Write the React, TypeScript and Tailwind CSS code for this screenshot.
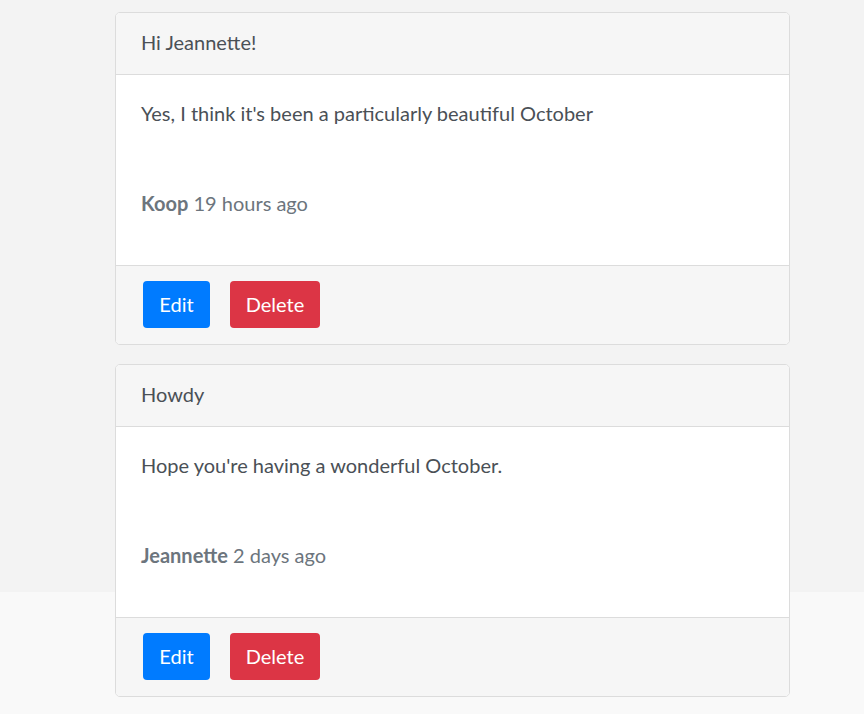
const posts = [
  {
    title: "Hi Jeannette!",
    body: "Yes, I think it's been a particularly beautiful October",
    author: "Koop",
    when: "19 hours ago",
  },
  {
    title: "Howdy",
    body: "Hope you're having a wonderful October.",
    author: "Jeannette",
    when: "2 days ago",
  },
];

const PostCard = ({ post }) => {
  return (
    <div className="w-[675px] rounded-[5px] border border-[#dcdcdc] bg-white overflow-hidden">
      <div className="h-[62px] flex items-center px-[25px] pb-[3px] bg-[#f6f6f6] border-b border-[#dcdcdc] text-[20px] text-[#4a5056]">
        {post.title}
      </div>
      <div className="h-[190px] px-[25px] pt-[24px] text-[20px] text-[#4a5056]">
        <p className="leading-[28px]">{post.body}</p>
        <p className="mt-[62px] leading-[28px] text-[#6c757d]">
          <span className="font-bold">{post.author}</span> {post.when}
        </p>
      </div>
      <div className="h-[79px] flex items-start pt-[15px] gap-[20px] px-[27px] bg-[#f6f6f6] border-t border-[#dcdcdc]">
        <button className="h-[47px] w-[67px] pb-[2px] rounded-[4px] bg-[#007bff] text-white text-[20px]">Edit</button>
        <button className="h-[47px] w-[90px] pb-[2px] rounded-[4px] bg-[#dc3545] text-white text-[20px]">Delete</button>
      </div>
    </div>
  );
};

export default function App() {
  return (
    <div className="min-h-screen bg-[#f9f9f9]" style={{ fontFamily: "Lato, sans-serif" }}>
      <div className="h-[592px] bg-[#f3f3f3] pt-[12px] pl-[115px]">
        <div className="flex flex-col gap-[19px]">
          {posts.map((p, i) => (
            <PostCard key={i} post={p} />
          ))}
        </div>
      </div>
    </div>
  );
}
